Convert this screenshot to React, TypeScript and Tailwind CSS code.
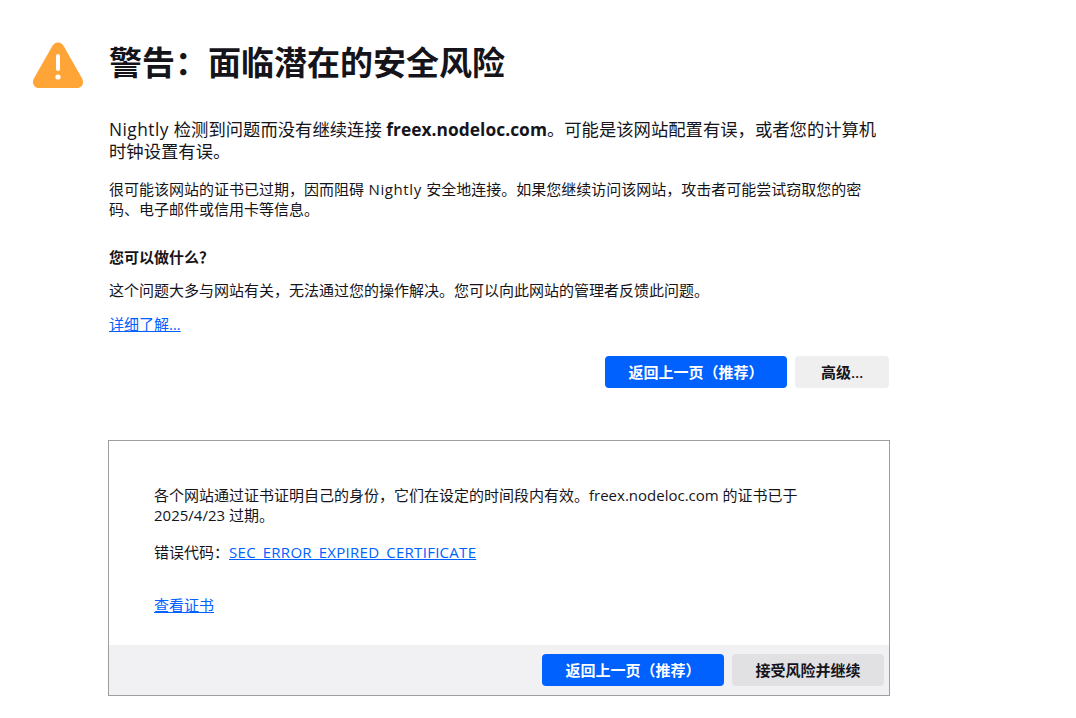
const FONT = "font-['Open_Sans','Noto_Sans_CJK_SC',sans-serif]";

function WarningIcon() {
  return (
    <svg width="52" height="48" viewBox="0 0 52 48" aria-hidden className="shrink-0">
      <path
        d="M26 1.5c-2.6 0-4.4 1.4-5.8 3.8L1.9 37.6c-.6 1.1-.9 2.3-.9 3.6C1 44.6 3.6 47 7 47h38c3.400 0 6-2.400 6-5.800 0-1.300-.3-2.500-.9-3.600L31.800 5.300C30.400 2.900 28.600 1.500 26 1.500z"
        fill="#ffa436"
      />
      <rect x="24" y="13" width="4" height="17" rx="2" fill="#fff" />
      <circle cx="26" cy="36" r="2.600" fill="#fff" />
    </svg>
  );
}

function Button({ primary, className, children }: { primary?: boolean; className: string; children: string }) {
  return (
    <button
      className={`h-8 rounded-[4px] text-[15px] font-semibold ${primary ? "bg-[#0061ff] text-white" : "text-[#15141a]"} ${className}`}
    >
      {children}
    </button>
  );
}

export default function App() {
  return (
    <div className={`${FONT} h-[718px] overflow-hidden bg-white text-[#15141a]`}>
      <div className="flex pl-[32px] pt-[41px]">
        <WarningIcon />
        <div className="ml-[25px] w-[780px]">
          <h1 className="text-[33px] font-semibold leading-[44px]">警告：面临潜在的安全风险</h1>
          <p className="mt-[33px] text-[17.33px] leading-[22px]">
            <span className="tracking-[0.45px]">Nightly </span>检测到问题而没有继续连接{" "}
            <strong className="font-bold tracking-[0.05px]">freex.nodeloc.com</strong>
            。可能是该网站配置有误，或者您的计算机时钟设置有误。
          </p>
          <p className="mt-[17px] text-[15px] leading-[20px]">
            很可能该网站的证书已过期，因而阻碍<span className="tracking-[0.6px]"> Nightly </span>
            安全地连接。如果您继续访问该网站，攻击者可能尝试窃取您的密码、电子邮件或信用卡等信息。
          </p>
          <p className="mt-[28px] text-[15px] font-bold leading-[20px]">您可以做什么？</p>
          <p className="mt-[13px] text-[15px] leading-[20px]">
            这个问题大多与网站有关，无法通过您的操作解决。您可以向此网站的管理者反馈此问题。
          </p>
          <a className="mt-[14px] block text-[15px] leading-[20px] text-[#0061ff] underline">详细了解…</a>
          <div className="mt-[22px] flex justify-end gap-2">
            <Button primary className="w-[182px]">返回上一页（推荐）</Button>
            <Button className="w-[94px] bg-[#efeff0]">高级…</Button>
          </div>
          <div className="-mx-px mt-[52px] border border-[#9e9ea0]">
            <div className="px-[45px] pb-[30px] pt-[44px] text-[15px] leading-[20px]">
              <p>各个网站通过证书证明自己的身份，它们在设定的时间段内有效。freex.nodeloc.com 的证书已于 2025/4/23 过期。</p>
              <p className="mt-[17px]">
                错误代码：
                <a className="tracking-[0.28px] text-[#0061ff] underline [text-decoration-skip-ink:none]">
                  SEC_ERROR_EXPIRED_CERTIFICATE
                </a>
              </p>
              <a className="mt-[33px] block text-[#0061ff] underline">查看证书</a>
            </div>
            <div className="flex justify-end gap-2 bg-[#f1f1f3] py-[9px] pr-[5px]">
              <Button primary className="w-[182px]">返回上一页（推荐）</Button>
              <Button className="w-[152px] bg-[#e1e1e4]">接受风险并继续</Button>
            </div>
          </div>
        </div>
      </div>
    </div>
  );
}
